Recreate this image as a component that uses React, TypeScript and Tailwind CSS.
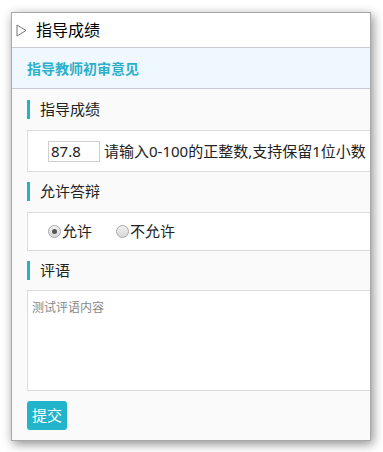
export default function App() {
  const font = { fontFamily: '"Noto Sans", "Noto Sans CJK SC", sans-serif' };
  return (
    <div className="w-[383px] h-[452px] bg-white overflow-hidden pt-[12px] pl-[11px]" style={font}>
      <div className="w-[360px] h-[429px] border border-[#a8a8a8] shadow-[2px_3px_10px_rgba(0,0,0,0.45)] overflow-hidden bg-[#fafafa] flex flex-col">
        {/* header */}
        <div className="h-[35px] shrink-0 bg-white border-b border-[#c8ccd2] flex items-center pl-[3px]">
          <svg width="11" height="13" viewBox="0 0 11 13" className="ml-[1px]">
            <path d="M1 1 L10 6.5 L1 12 Z" fill="none" stroke="#777" strokeWidth="1" />
          </svg>
          <span className="ml-[9px] text-[16px] text-black leading-none">指导成绩</span>
        </div>
        <div className="h-[41px] shrink-0 bg-[#eff8fe] border-b border-[#c8ccd2] flex items-center pl-[15px]">
          <span className="text-[14px] font-bold text-[#2cb0ca]">指导教师初审意见</span>
        </div>
        <div className="w-[420px] pl-[15px] flex flex-col">
          <SectionTitle title="指导成绩" className="mt-[11px]" />
          <div className="mt-[11px] h-[42px] bg-white border border-[#dcdcdc] flex items-center pl-[20px]">
            <div className="w-[52px] h-[21px] border border-[#cfcfcf] text-[15px] text-[#222] leading-[19px] pl-[2px]">87.8</div>
            <span className="ml-[4px] text-[15px] text-[#222] whitespace-nowrap">请输入0-100的正整数,支持保留1位小数</span>
          </div>
          <SectionTitle title="允许答辩" className="mt-[10px]" />
          <div className="mt-[11px] h-[39px] bg-white border border-[#dcdcdc] flex items-center pl-[20px] text-[15px] text-[#222]">
            <Radio checked />
            <span>允许</span>
            <span className="w-[24px]" />
            <Radio />
            <span>不允许</span>
          </div>
          <SectionTitle title="评语" className="mt-[10px]" />
          <div className="mt-[10px] h-[101px] bg-white border border-[#dcdcdc] pl-[4px] pt-[3px]">
            <span className="text-[12px] text-[#888]">测试评语内容</span>
          </div>
          <button className="mt-[10px] w-[40px] h-[29px] rounded-[3px] bg-[#21b4cb] text-white text-[15px] flex items-center justify-center">
            提交
          </button>
        </div>
      </div>
    </div>
  );
}

function SectionTitle({ title, className }: { title: string; className?: string }) {
  return (
    <div className={`flex items-center h-[19px] ${className ?? ""}`}>
      <div className="w-[3px] h-[19px] bg-[#22b3cb]" />
      <span className="ml-[10px] text-[15px] text-[#222] leading-none">{title}</span>
    </div>
  );
}

function Radio({ checked }: { checked?: boolean }) {
  return (
    <span className="w-[13px] h-[13px] rounded-full border border-[#a8a8a8] bg-gradient-to-b from-[#f2f2f2] to-[#d6d6d6] flex items-center justify-center mr-[1px]">
      {checked && <span className="w-[5px] h-[5px] rounded-full bg-[#555]" />}
    </span>
  );
}
